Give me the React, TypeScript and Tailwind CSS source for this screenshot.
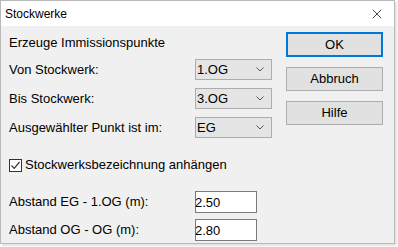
import { X } from 'lucide-react';

const font = { fontFamily: '"Liberation Sans", Arial, sans-serif' };

function Combo({ value }: { value: string }) {
  return (
    <div className="flex items-center w-[77px] h-[21px] border border-[#adadad] bg-[#e5e5e5] pl-[1px] pr-[7px]">
      <span className="flex-1 text-[13px] leading-none text-black">{value}</span>
      <svg width="8" height="5" viewBox="0 0 8 5">
        <path d="M0.5 0.5 L4 4 L7.5 0.5" fill="none" stroke="#555" strokeWidth="1" />
      </svg>
    </div>
  );
}

function Field({ value }: { value: string }) {
  return (
    <div className="flex items-center w-[62px] h-[22px] border border-[#7a7a7a] bg-white">
      <span className="text-[13px] leading-none text-black -ml-[1px]">{value}</span>
    </div>
  );
}

function Btn({ label, primary }: { label: string; primary?: boolean }) {
  return (
    <div
      className={
        primary
          ? 'flex items-center justify-center w-[97px] h-[25px] border-2 border-[#0078d7] bg-[#e1e1e1] text-[13px]'
          : 'flex items-center justify-center w-[97px] h-[24px] border border-[#adadad] bg-[#e1e1e1] text-[13px]'
      }
    >
      {label}
    </div>
  );
}

function App() {
  return (
    <div className="w-[398px] h-[247px] bg-white" style={font}>
      <div className="flex flex-col w-[395px] h-[244px] border border-[#b9b9b9] shadow-[2px_2px_2px_rgba(0,0,0,0.12)]">
        <div className="flex items-center justify-between h-[25px] bg-white pl-[4px] pr-[9px]">
          <span className="text-[12px] text-black">Stockwerke</span>
          <X size={16} strokeWidth={1.1} className="text-black" />
        </div>
        <div className="flex flex-1 bg-[#f0f0f0] text-[13px] text-black">
          <div className="flex flex-col pl-[8px] pt-[9px]">
            <div className="h-[16px] leading-[16px]">Erzeuge Immissionspunkte</div>
            <div className="flex flex-col gap-[8px] mt-[8px]">
              <div className="flex items-center">
                <span className="w-[186px]">Von Stockwerk:</span>
                <Combo value="1.OG" />
              </div>
              <div className="flex items-center">
                <span className="w-[186px]">Bis Stockwerk:</span>
                <Combo value="3.OG" />
              </div>
              <div className="flex items-center">
                <span className="w-[186px]">Ausgewählter Punkt ist im:</span>
                <Combo value="EG" />
              </div>
            </div>
            <div className="flex items-center gap-[3px] h-[16px] mt-[19px]">
              <div className="flex items-center justify-center w-[13px] h-[13px] border border-[#333] bg-white">
                <svg width="11" height="11" viewBox="0 0 11 11">
                  <path d="M1.5 5.5 L4.2 8.3 L9.5 2" fill="none" stroke="#333" strokeWidth="1.2" />
                </svg>
              </div>
              <span>Stockwerksbezeichnung anhängen</span>
            </div>
            <div className="flex flex-col gap-[6px] mt-[18px]">
              <div className="flex items-center">
                <span className="w-[186px]">Abstand EG - 1.OG (m):</span>
                <Field value="2.50" />
              </div>
              <div className="flex items-center">
                <span className="w-[186px]">Abstand OG - OG (m):</span>
                <Field value="2.80" />
              </div>
            </div>
          </div>
          <div className="flex flex-col gap-[10px] ml-auto mr-[11px] pt-[6px]">
            <Btn label="OK" primary />
            <Btn label="Abbruch" />
            <Btn label="Hilfe" />
          </div>
        </div>
      </div>
    </div>
  );
}

export default App;
